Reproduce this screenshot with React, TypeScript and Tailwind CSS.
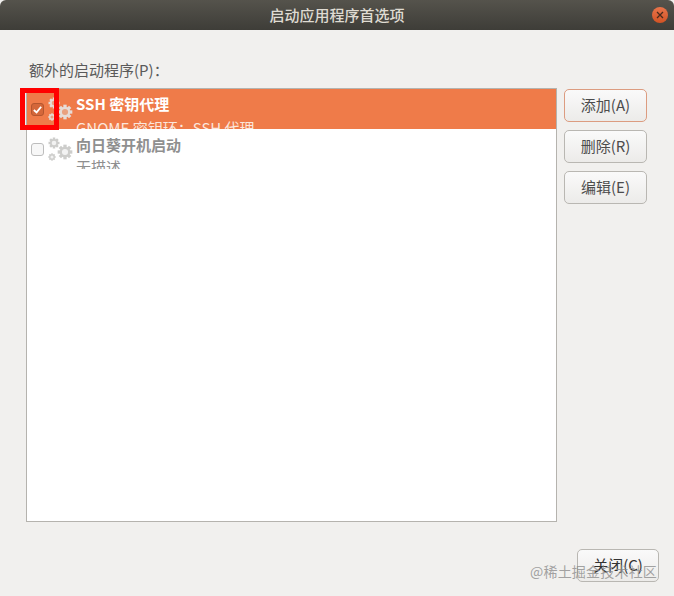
const font = "font-['Noto_Sans_CJK_SC','Noto_Sans',sans-serif]";

function Gear({ size, color, hole = "transparent" }: { size: number; color: string; hole?: string }) {
  const teeth = [0, 45, 90, 135, 180, 225, 270, 315];
  return (
    <svg width={size} height={size} viewBox="0 0 24 24" className="block">
      {teeth.map((a) => (
        <rect key={a} x="9.5" y="1" width="5" height="5" fill={color} transform={`rotate(${a} 12 12)`} />
      ))}
      <circle cx="12" cy="12" r="8" fill={color} />
      <circle cx="12" cy="12" r="4.6" fill={hole} />
    </svg>
  );
}

function Gears({ color, hole }: { color: string; hole: string }) {
  return (
    <div className="relative w-[25px] h-[25px] shrink-0">
      <div className="absolute left-0 top-0"><Gear size={12} color={color} hole={hole} /></div>
      <div className="absolute left-[9px] top-[7px]"><Gear size={16} color={color} hole={hole} /></div>
      <div className="absolute left-0 top-[16px]"><Gear size={8} color={color} hole={hole} /></div>
    </div>
  );
}

function Btn({ label, cls = "" }: { label: string; cls?: string }) {
  return (
    <button className={`h-[33px] rounded-[5px] border bg-gradient-to-b from-[#fafafa] to-[#ecebe9] text-[15px] text-[#4c4c4c] flex items-center justify-center ${cls}`}>
      {label}
    </button>
  );
}

function Row({ selected, title, sub }: { selected?: boolean; title: string; sub: string }) {
  return (
    <div className={`h-[40px] overflow-hidden flex items-start pl-[4px] ${selected ? "bg-[#ef7b49]" : "bg-white"}`}>
      <div className={`mt-[14px] w-[13px] h-[13px] rounded-[3px] border shrink-0 flex items-center justify-center ${selected ? "bg-[#d4673a] border-[#b5562f]" : "bg-[#f7f7f7] border-[#bdbdbd]"}`}>
        {selected && (
          <svg width="11" height="11" viewBox="0 0 12 12"><path d="M2 6.5 L5 9.2 L10 3" fill="none" stroke="#ffffff" strokeWidth="2" /></svg>
        )}
      </div>
      <div className="ml-[4px] mt-[8px]">
        <Gears color={selected ? "#e6dcd7" : "#cdcdcb"} hole={selected ? "#e9a17f" : "#f2f2f2"} />
      </div>
      <div className={`ml-[3px] flex flex-col ${selected ? "pt-[4px]" : "pt-[5px]"}`}>
        <span className={`text-[15px] leading-[22px] font-bold whitespace-nowrap ${selected ? "text-white" : "text-[#8f8f8f]"}`}>{title}</span>
        <span className={`text-[15px] leading-[22px] whitespace-nowrap ${selected ? "mt-[2px] text-[#fbe6dc]" : "mt-[0px] text-[#8f8f8f]"}`}>{sub}</span>
      </div>
    </div>
  );
}

export default function App() {
  return (
    <div className={`relative w-[674px] h-[596px] overflow-hidden bg-[#f1f0ee] ${font}`}>
      <div className="h-[30px] rounded-t-[6px] bg-gradient-to-b from-[#55534c] to-[#3e3d38] flex items-center justify-center relative">
        <span className="text-[15px] text-[#dfdbd2] font-medium">启动应用程序首选项</span>
        <div className="absolute left-[652px] top-[7px] w-[16px] h-[16px] rounded-full bg-gradient-to-b from-[#e9744a] to-[#d25324] flex items-center justify-center">
          <svg width="8" height="8" viewBox="0 0 8 8"><path d="M1 1 L7 7 M7 1 L1 7" stroke="#4a2a1c" strokeWidth="1.3" /></svg>
        </div>
      </div>

      <div className="pl-[26px] pr-[15px] pt-[29px] h-[566px] flex flex-col">
        <div className="text-[15px] leading-[22px] text-[#5a5a5a] ml-[3px] h-[29px]">额外的启动程序(P)：</div>
        <div className="flex gap-[7px] items-start">
          <div className="w-[531px] h-[434px] border border-[#b5b3ae] bg-white overflow-hidden">
            <Row selected title="SSH 密钥代理" sub="GNOME 密钥环：SSH 代理" />
            <Row title="向日葵开机启动" sub="无描述" />
          </div>
          <div className="flex flex-col gap-[8px] pt-[1px]">
            <Btn label="添加(A)" cls="w-[83px] border-[#dc9c80]" />
            <Btn label="删除(R)" cls="w-[83px] border-[#b9b7b2]" />
            <Btn label="编辑(E)" cls="w-[83px] border-[#b9b7b2]" />
          </div>
        </div>
        <div className="flex justify-end mt-[27px]">
          <Btn label="关闭(C)" cls="w-[82px] border-[#b9b7b2] text-[#333333]" />
        </div>
      </div>

      <div className="absolute left-[20px] top-[88px] w-[39px] h-[42px] border-[5px] border-[#ff0000]" />
      <div className="absolute left-[530px] top-[561px] text-[14px] leading-[20px] tracking-[0.2px] text-[#8c8c8c]/80 whitespace-nowrap">@稀土掘金技术社区</div>
    </div>
  );
}
